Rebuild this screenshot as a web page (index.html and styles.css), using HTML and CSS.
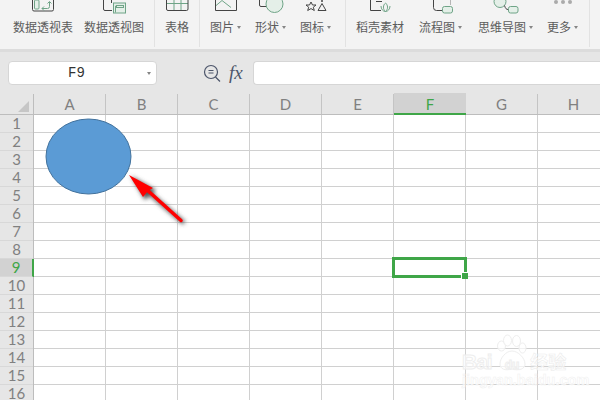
FILE: index.html
```html
<!DOCTYPE html>
<html lang="zh">
<head>
<meta charset="utf-8">
<title>WPS 表格</title>
<link rel="stylesheet" href="styles.css">
</head>
<body>
<div class="app">
  <div class="ribbon">
    <div class="group g1">
      <div class="item">
        <svg class="ico w60" viewBox="13 0 60 14"><rect class="dk" x="32.5" y="-4" width="21" height="15" rx="1.5"/><rect class="gr" x="34.5" y="0" width="4.5" height="9" rx="1"/><path class="gr" d="M42 8.5h5.5a2 2 0 0 0 2-2V2M47.5 3.500L49.500 1.500L51.500 3.500M44 6.500L42 8.500L44 10.500"/></svg>
        <span class="lb">数据透视表</span>
      </div>
      <div class="item">
        <svg class="ico w60" viewBox="84 0 60 14"><path class="dk" d="M103.500 -2V9a1.500 1.500 0 0 0 1.500 1.500H112M111.500 -2V3"/><rect class="gr" x="113.500" y="3" width="12" height="10"/><path class="gr" d="M115.500 12.500V6h8"/><rect class="gr" x="116.500" y="5.500" width="7" height="2"/></svg>
        <span class="lb">数据透视图</span>
      </div>
    </div>
    <div class="group g2">
      <div class="item">
        <svg class="ico w24" viewBox="165 0 24 14"><path class="gr" d="M174 -2V10M181 -2V10M167 3.500H188"/><path class="dk" d="M166.500 -2V9a1.500 1.500 0 0 0 1.500 1.500H186.500a1.500 1.500 0 0 0 1.500-1.500V-2"/></svg>
        <span class="lb">表格</span>
      </div>
    </div>
    <div class="group g3">
      <div class="item">
        <svg class="ico w32" viewBox="210 0 32 14"><path class="gr" d="M215.500 6L222 0.500L231 7.500"/><path class="dk" d="M215.500 -2V10.500H236.500V-2"/></svg>
        <span class="lb">图片<i class="caret"></i></span>
      </div>
      <div class="item">
        <svg class="ico w32" viewBox="255 0 32 14"><path class="dk" d="M259.500 -2V5a1.500 1.500 0 0 0 1.500 1.500H267"/><circle class="gr" cx="274.500" cy="4" r="8.500"/></svg>
        <span class="lb">形状<i class="caret"></i></span>
      </div>
      <div class="item">
        <svg class="ico w32" viewBox="300 0 32 14"><path class="dk" d="M311 2L312.500 5H316L313.300 7.200L314.300 10.500L311 8.600L307.700 10.500L308.700 7.200L306 5H309.500Z"/><path class="dk" d="M322 3.500L326 10.500H318Z"/><circle class="blk" cx="322" cy="1" r="1"/></svg>
        <span class="lb">图标<i class="caret"></i></span>
      </div>
    </div>
    <div class="group g4">
      <div class="item">
        <svg class="ico w48" viewBox="356 0 48 14"><path class="dk" d="M370.500 -2V10.500H381M376 1.500H382"/><path class="gr" d="M385.500 3C383 5 382.500 9 385.500 11.500C388.500 9 388 5 385.500 3ZM381 6C381 9 383 11.500 385.500 11.500C388 11.500 390 9 390 6"/></svg>
        <span class="lb">稻壳素材</span>
      </div>
      <div class="item">
        <svg class="ico w41" viewBox="419 0 41 14"><path class="dk" d="M433.500 -2V7.500a3 3 0 0 0 3 3H442"/><path class="gr1" d="M450.500 0V5"/><rect class="gr" x="442.500" y="6.500" width="10" height="6.500" rx="2"/></svg>
        <span class="lb">流程图<i class="caret"></i></span>
      </div>
      <div class="item">
        <svg class="ico w56" viewBox="476 0 56 14"><circle class="gr" cx="498" cy="1.500" r="6"/><path class="dk" d="M502.500 5.500C503.500 8.500 504 9.500 506.500 9.500"/><rect class="gr" x="506.500" y="6.500" width="9.500" height="6.500" rx="2"/></svg>
        <span class="lb">思维导图<i class="caret"></i></span>
      </div>
      <div class="item">
        <svg class="ico w32" viewBox="545 0 32 14"><circle class="dot" cx="554" cy="2" r="2"/><circle class="dot" cx="561" cy="2" r="2"/><circle class="dot" cx="568" cy="2" r="2"/></svg>
        <span class="lb">更多<i class="caret"></i></span>
      </div>
    </div>
  </div>
  <div class="strip"></div>
  <div class="formula">
    <div class="namebox"><span class="nametext">F9</span><i class="caret"></i></div>
    <svg class="zoomico" viewBox="0 0 18 18"><circle cx="8" cy="8" r="6.500"/><path d="M5.500 6.500H10.500M5.500 9H10.500M12.500 13L17 17.500"/></svg>
    <span class="fx">fx</span>
    <div class="input"></div>
  </div>
  <div class="colheads">
    <div class="corner"><i class="tri"></i></div>
    <div class="col">A</div><div class="col">B</div><div class="col">C</div><div class="col">D</div>
    <div class="col">E</div><div class="col active">F</div><div class="col">G</div><div class="col">H</div><div class="col"></div>
  </div>
  <div class="body">
    <div class="rows">
      <div class="row">1</div><div class="row">2</div><div class="row">3</div><div class="row">4</div>
      <div class="row">5</div><div class="row">6</div><div class="row">7</div><div class="row">8</div>
      <div class="row active">9</div><div class="row">10</div><div class="row">11</div><div class="row">12</div>
      <div class="row">13</div><div class="row">14</div><div class="row">15</div><div class="row">16</div>
    </div>
    <div class="grid"></div>
  </div>

  <svg class="shapes" viewBox="0 0 600 400">
    <defs>
      <filter id="blur" x="-30%" y="-30%" width="160%" height="160%"><feGaussianBlur stdDeviation="2"/></filter>
    </defs>
    <ellipse class="oval" cx="88.500" cy="156.500" rx="42.500" ry="37.500"/>
    <g class="arrowshadow" filter="url(#blur)"><path d="M184 223L147 191" /><path class="sh" d="M131 176L156 190L145 200Z"/></g>
    <path class="shaft" d="M181 220.500L146 189"/>
    <path class="head" d="M129 175L153 188L148 191L143 197Z"/>
  </svg>

  <div class="selection"><i class="handle"></i></div>

  <div class="mark">
    <svg class="paw" viewBox="495 334 35 38"><ellipse cx="501.500" cy="346" rx="4" ry="5"/><ellipse cx="507.500" cy="340.500" rx="4" ry="5.500"/><ellipse cx="516.500" cy="341" rx="4" ry="5.500"/><ellipse cx="522.500" cy="348" rx="3.500" ry="5"/><path d="M512 351C506 351 500 358 500 364C500 369 505 371 512 369C519 371 525 369 525 364C525 358 518 351 512 351Z"/></svg>
    <div class="brand"><span class="bai">Bai</span><span class="du">du</span><span class="jy">经验</span></div>
    <div class="url">jingyan.baidu.com</div>
  </div>
</div>
</body>
</html>
```
FILE: styles.css
```css
* { box-sizing: border-box; }
html, body { margin: 0; padding: 0; background: #fff; }
.app { position: relative; width: 600px; height: 400px; overflow: hidden; font-family: "Noto Sans CJK SC", "Liberation Sans", sans-serif; }

.ribbon { display: flex; height: 49px; background: #f3f3f3; }
.group { display: flex; height: 47px; padding: 0 10px; border-right: 1px solid #e2e2e2; }
.g1 { gap: 11px; padding-left: 13px; width: 155px; }
.g2 { width: 45px; }
.g3 { gap: 13px; padding-right: 13px; width: 146px; }
.g4 { padding-right: 12px; width: 244px; }
.g4 .item:nth-child(2) { margin-left: 15px; }
.g4 .item:nth-child(3) { margin-left: 16px; }
.g4 .item:nth-child(4) { margin-left: 13px; }
.item { display: flex; flex-direction: column; align-items: flex-start; }
.ico { display: block; height: 14px; margin-bottom: 5px; flex: none; }
.w24 { width: 24px; } .w32 { width: 32px; } .w41 { width: 41px; } .w48 { width: 48px; } .w56 { width: 56px; } .w60 { width: 60px; }
.lb { display: flex; align-items: center; height: 16px; font-size: 12px; line-height: 16px; color: #5c5c5c; white-space: nowrap; }
.caret { display: block; width: 0; height: 0; margin-left: 3px; border: 2.5px solid transparent; border-top: 3px solid #858585; border-bottom: 0; }

.dk, .gr, .gr1 { fill: none; stroke-width: 1; }
.dk { stroke: #444; }
.gr { stroke: #6fa487; fill: #e4efe8; }
.ico path.gr { fill: none; }
.gr1 { stroke: #b5b5b5; }
.blk { fill: #444; }
.dot { fill: #aaa; }

.strip { height: 3px; background: #dcdcdc; }
.formula { display: flex; align-items: flex-start; height: 42px; padding: 9px 0 0 8px; background: #e6e6e6; }
.namebox { display: flex; align-items: center; justify-content: space-between; width: 149px; height: 24px; padding: 0 5px 0 0; background: #fff; border: 1px solid #d6d6d6; border-radius: 4px; }
.nametext { flex: 1; text-align: center; font-family: "Liberation Mono", monospace; font-size: 14px; color: #333; }
.zoomico { width: 18px; height: 18px; margin: 3px 0 0 46px; fill: none; stroke: #4d566b; stroke-width: 1.200; }
.fx { width: 24px; margin: 1px 0 0 8px; font-family: "Liberation Serif", serif; font-style: italic; font-size: 19px; line-height: 21px; color: #4d566b; }
.input { flex: 1; height: 24px; background: #fff; border: 1px solid #d6d6d6; border-radius: 4px 0 0 4px; border-right: 0; }

.colheads { display: flex; height: 21px; background: #e6e6e6; border-bottom: 1px solid #bdbdbd; }
.corner { position: relative; flex: none; width: 34px; border-right: 1px solid #bdbdbd; }
.tri { position: absolute; right: 4px; bottom: 2px; width: 0; height: 0; border-style: solid; border-width: 0 0 11px 11px; border-color: transparent transparent #c6c6c6 transparent; }
.col { flex: none; width: 72px; height: 20px; padding-top: 1px; border-right: 1px solid #c4c4c4; text-align: center; font-family: Lato, "Liberation Sans", sans-serif; font-size: 15px; line-height: 19px; color: #808080; }
.col.active { height: 21px; background: #d2d2d2; box-shadow: 0 -1px 0 #d2d2d2; border-right: 0; border-bottom: 2px solid #3fa648; color: #3fa648; }

.body { display: flex; height: 285px; }
.rows { flex: none; width: 34px; background: #e6e6e6; border-right: 1px solid #bdbdbd; }
.row { height: 18px; border-bottom: 1px solid #d8d8d8; text-align: center; font-family: Lato, "Liberation Sans", sans-serif; font-size: 15px; line-height: 17px; color: #808080; }
.row.active { background: #d2d2d2; box-shadow: 1px 0 0 #3fa648; border-right: 1px solid #3fa648; color: #3fa648; }
.grid { flex: 1; background-color: #fff;
  background-image:
    repeating-linear-gradient(to right, transparent 0 71px, #d0d0d0 71px 72px),
    repeating-linear-gradient(to bottom, transparent 0 17px, #d0d0d0 17px 18px); }

.shapes { position: absolute; left: 0; top: 0; width: 600px; height: 400px; pointer-events: none; }
.oval { fill: #5b9bd5; stroke: #41719c; stroke-width: 1; }
.arrowshadow path { fill: none; stroke: #555; stroke-width: 4; }
.arrowshadow .sh { fill: #555; stroke: none; }
.shaft { fill: none; stroke: #f00; stroke-width: 3.500; stroke-linecap: round; }
.head { fill: #f00; }

.selection { position: absolute; left: 392px; top: 257px; width: 75px; height: 21px; border: 3px solid #3fa648; }
.handle { position: absolute; right: -4px; bottom: -4px; width: 6px; height: 6px; background: #3fa648; box-shadow: -1px -1px 0 #fff; }

.mark { position: absolute; left: 462px; top: 334px; width: 110px; height: 52px; color: #fff; }
.paw { position: absolute; left: 33px; top: 0; width: 35px; height: 38px; fill: rgba(255,255,255,.7); stroke: #eee; stroke-width: 1; }
.brand { position: absolute; left: 0; top: 14px; display: flex; align-items: baseline; font-family: "Liberation Sans", sans-serif; font-weight: 700; font-size: 21px; line-height: 26px; color: rgba(255,255,255,.7); -webkit-text-stroke: 1px #eee; }
.bai { letter-spacing: -1px; }
.du { margin-left: 13px; font-size: 12px; line-height: 20px; }
.jy { margin-left: 11px; font-family: "Noto Sans CJK SC", sans-serif; font-size: 18px; -webkit-text-stroke: 0.600px #ececec; }
.url { position: absolute; left: 0; top: 38px; font-family: "Liberation Sans", sans-serif; font-weight: 700; font-size: 14.500px; line-height: 16px; white-space: nowrap; color: rgba(255,255,255,.7); -webkit-text-stroke: 0.500px #efefef; }
```
